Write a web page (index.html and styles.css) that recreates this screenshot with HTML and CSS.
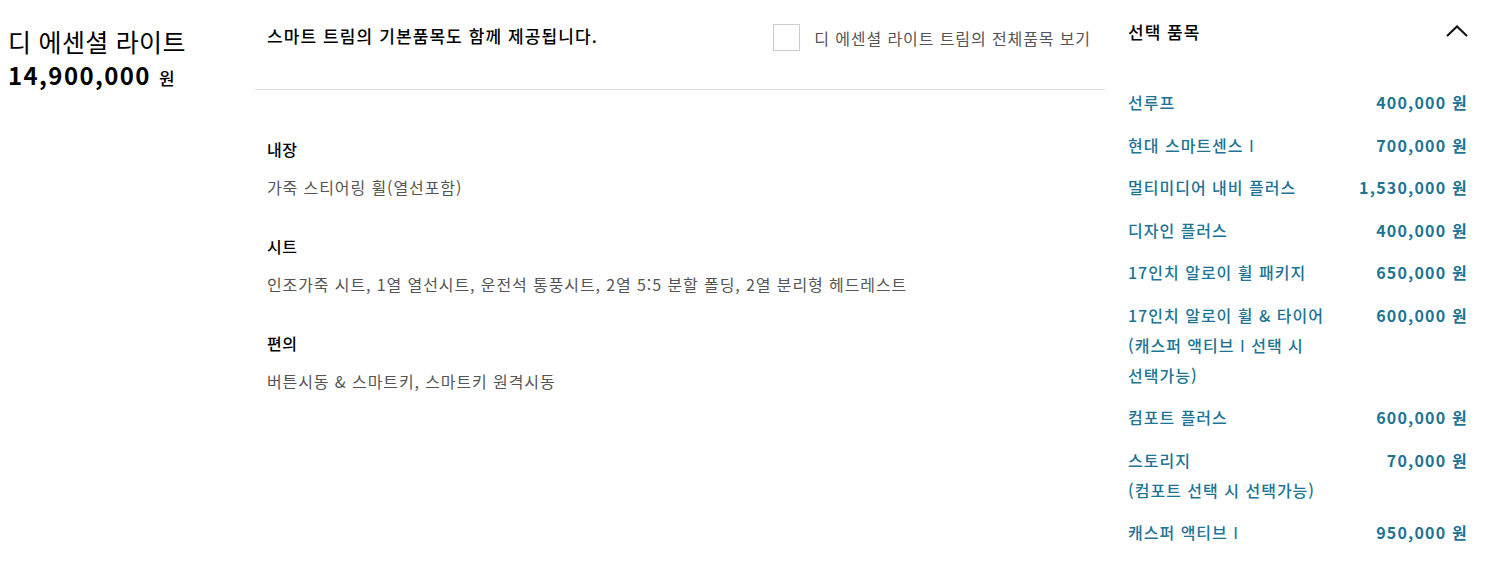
FILE: index.html
```html
<!DOCTYPE html>
<html lang="ko">
<head>
  <meta charset="UTF-8">
  <title>디 에센셜 라이트</title>
  <link rel="stylesheet" href="styles.css">
</head>
<body>
  <div class="page">
    <div class="trim">
      <div class="trimName">디 에센셜 라이트</div>
      <div class="trimPrice">14,900,000 <span class="won">원</span></div>
    </div>

    <div class="basic">
      <div class="basicHead">
        <div class="basicTitle">스마트 트림의 기본품목도 함께 제공됩니다.</div>
        <label class="allItems">
          <span class="checkBox"></span>
          <span class="allLabel">디 에센셜 라이트 트림의 전체품목 보기</span>
        </label>
      </div>
      <div class="basicList">
        <div class="group">
          <div class="groupTitle">내장</div>
          <div class="groupText">가죽 스티어링 휠(열선포함)</div>
        </div>
        <div class="group">
          <div class="groupTitle">시트</div>
          <div class="groupText">인조가죽 시트, 1열 열선시트, 운전석 통풍시트, 2열 5:5 분할 폴딩, 2열 분리형 헤드레스트</div>
        </div>
        <div class="group">
          <div class="groupTitle">편의</div>
          <div class="groupText">버튼시동 &amp; 스마트키, 스마트키 원격시동</div>
        </div>
      </div>
    </div>

    <div class="options">
      <div class="optionsHead">
        <div class="optionsTitle">선택 품목</div>
        <svg class="chevron" width="22" height="12" viewBox="0 0 22 12">
          <path d="M1 11 L11 1.5 L21 11" fill="none" stroke="#111" stroke-width="2"/>
        </svg>
      </div>
      <ul class="optionList">
        <li><span class="optName">선루프</span><span class="optPrice">400,000 원</span></li>
        <li><span class="optName">현대 스마트센스 <span class="roman">Ⅰ</span></span><span class="optPrice">700,000 원</span></li>
        <li><span class="optName">멀티미디어 내비 플러스</span><span class="optPrice">1,530,000 원</span></li>
        <li><span class="optName">디자인 플러스</span><span class="optPrice">400,000 원</span></li>
        <li><span class="optName">17인치 알로이 휠 패키지</span><span class="optPrice">650,000 원</span></li>
        <li><span class="optName">17인치 알로이 휠 &amp; 타이어 (캐스퍼 액티브 <span class="roman">Ⅰ</span> 선택 시 선택가능)</span><span class="optPrice">600,000 원</span></li>
        <li><span class="optName">컴포트 플러스</span><span class="optPrice">600,000 원</span></li>
        <li><span class="optName">스토리지<br>(컴포트 선택 시 선택가능)</span><span class="optPrice">70,000 원</span></li>
        <li><span class="optName">캐스퍼 액티브 <span class="roman">Ⅰ</span></span><span class="optPrice">950,000 원</span></li>
      </ul>
    </div>
  </div>
</body>
</html>
```

FILE: styles.css
```css
* {
  margin: 0;
  padding: 0;
  box-sizing: border-box;
}

body {
  font-family: "Noto Sans CJK KR", "Noto Sans", sans-serif;
  background-color: #fff;
  color: #000;
}

.page {
  display: flex;
  align-items: flex-start;
  padding-top: 24px;
}

.trim {
  width: 255px;
  padding-left: 8px;
}

.trimName {
  font-size: 25px;
  line-height: 34px;
  font-weight: 400;
  letter-spacing: 0.3px;
}

.trimPrice {
  font-size: 24px;
  line-height: 34px;
  font-weight: 700;
  letter-spacing: 1.4px;
}

.trimPrice .won {
  font-size: 17px;
  font-weight: 500;
  letter-spacing: 0;
}

.basic {
  width: 850px;
}

.basicHead {
  display: flex;
  justify-content: space-between;
  align-items: flex-start;
  height: 66px;
  padding-left: 12px;
  padding-right: 14px;
  border-bottom: 1px solid #ddd;
}

.basicTitle {
  font-size: 17px;
  line-height: 24px;
  font-weight: 500;
  letter-spacing: 1.1px;
}

.allItems {
  display: flex;
  align-items: center;
  gap: 14px;
}

.checkBox {
  width: 27px;
  height: 27px;
  border: 1px solid #ccc;
  background-color: #fff;
}

.allLabel {
  font-size: 16px;
  color: #555;
  letter-spacing: 0.9px;
}

.basicList {
  padding: 47px 0 0 12px;
}

.group {
  margin-bottom: 35px;
}

.groupTitle {
  font-size: 16px;
  font-weight: 500;
  line-height: 24px;
  margin-bottom: 14px;
  letter-spacing: 0.5px;
}

.groupText {
  font-size: 16px;
  line-height: 24px;
  color: #555;
  letter-spacing: 0.9px;
}

.options {
  width: 340px;
  margin-left: 23px;
}

.optionsHead {
  display: flex;
  justify-content: space-between;
  align-items: center;
  height: 20px;
  margin-top: -3px;
}

.optionsTitle {
  font-size: 17px;
  font-weight: 500;
  letter-spacing: 1px;
}

.optionList {
  list-style: none;
  padding-top: 46px;
}

.optionList li {
  display: flex;
  justify-content: space-between;
  align-items: flex-start;
  margin-bottom: 12.5px;
  color: #1d7494;
  font-size: 16px;
  line-height: 30px;
}

.optName {
  width: 205px;
  font-weight: 500;
  letter-spacing: 1px;
  word-break: keep-all;
}

.roman {
  font-family: "DejaVu Sans", sans-serif;
  font-size: 16px;
  line-height: 1;
}

.optPrice {
  font-weight: 700;
  font-size: 16px;
  letter-spacing: 1.2px;
  white-space: nowrap;
}
```
